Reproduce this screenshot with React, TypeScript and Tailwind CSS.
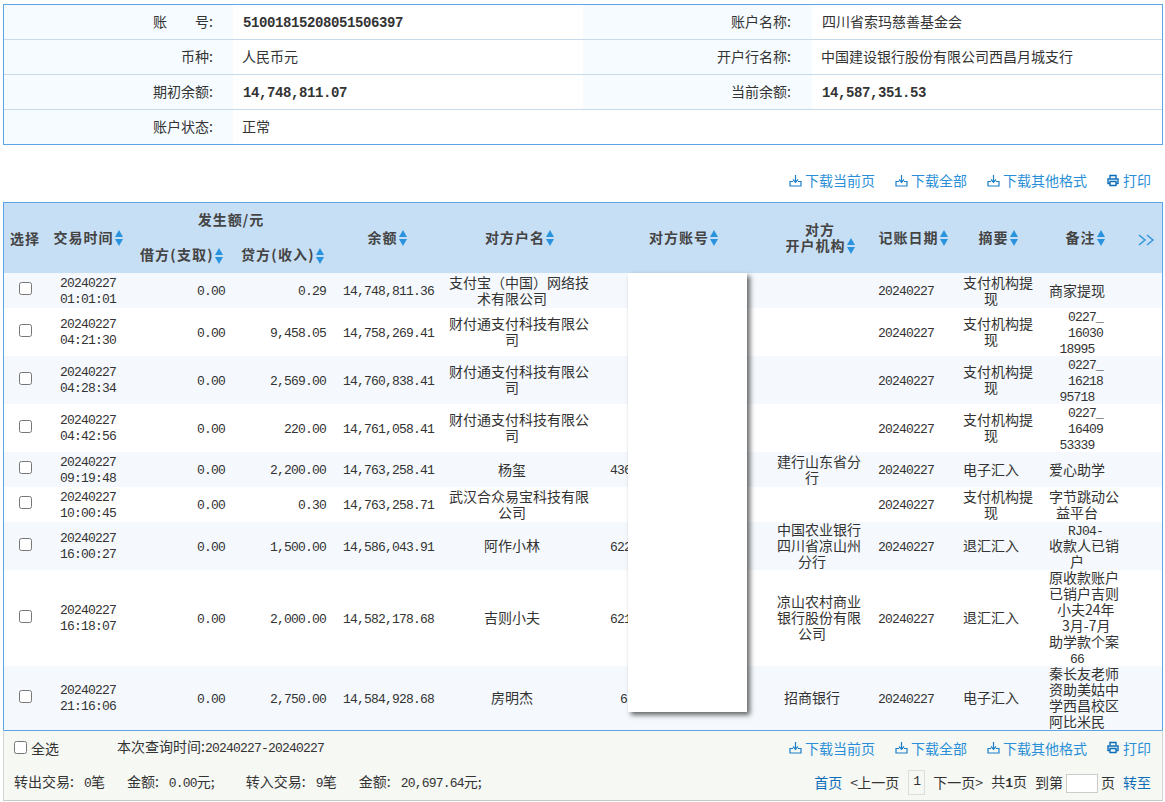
const num = "font-['Liberation_Mono'] text-[13px] tracking-[-0.8px]";
const bold = "font-['Liberation_Mono'] text-[14px] font-bold tracking-[-0.4px]";

function Sort() {
  return (
    <svg width="8" height="16" viewBox="0 0 8 16" className="inline-block align-middle ml-[1px] mb-[1px]">
      <polygon points="4,0 8,7 0,7" fill="#2a93dd" />
      <polygon points="0,9 8,9 4,16" fill="#2a93dd" />
    </svg>
  );
}

function Tray() {
  return (
    <svg width="13" height="13" viewBox="0 0 13 13" fill="none" stroke="#1c7fc8" strokeWidth="1.2">
      <path d="M6.5 1v7M4 5.5l2.5 2.8L9 5.5" />
      <path d="M4 7.5H1v4.5h11V7.5H9" />
    </svg>
  );
}

function Printer() {
  return (
    <svg width="12" height="13" viewBox="0 0 12 13" fill="none" stroke="#0b6cb8" strokeWidth="1.4">
      <path d="M3 4.5V1.5h6v3" />
      <path d="M3 9.5H1V5h10v4.5H9" />
      <path d="M3 7.5h6v4H3z" />
    </svg>
  );
}

function Links() {
  return (
    <div className="flex gap-[20px] text-[#2a8fd8]">
      <span className="flex items-center gap-[3px]"><Tray />下载当前页</span>
      <span className="flex items-center gap-[3px]"><Tray />下载全部</span>
      <span className="flex items-center gap-[3px]"><Tray />下载其他格式</span>
      <span className="flex items-center gap-[4px]"><Printer />打印</span>
    </div>
  );
}

function Label({ children, right }: { children: React.ReactNode; right?: boolean }) {
  return (
    <td className={`bg-[#f6fbff] pb-[2px] ${right ? "pr-[18px]" : "pr-[17px]"}`}>
      <div className="flex justify-end">
        {children}<span className="w-[7px]">:</span>
      </div>
    </td>
  );
}

function Paren({ a, b }: { a: string; b: string }) {
  return (
    <>
      {a}<span className="inline-block w-[7px] text-center">(</span>{b}<span className="inline-block w-[7px] text-center">)</span>
    </>
  );
}

const rows = [
  { h: "h-[35px]", d: "20240227", t: "01:01:01", c: "0.29", b: "14,748,811.36", name: ["支付宝（中国）网络技", "术有限公司"], acct: "", bank: [], sum: ["支付机构提", "现"], note: ["商家提现"] },
  { h: "h-[48px]", d: "20240227", t: "04:21:30", c: "9,458.05", b: "14,758,269.41", name: ["财付通支付科技有限公", "司"], acct: "", bank: [], sum: ["支付机构提", "现"], note: ["0227_", "16030", "18995"], code: true },
  { h: "h-[48px]", d: "20240227", t: "04:28:34", c: "2,569.00", b: "14,760,838.41", name: ["财付通支付科技有限公", "司"], acct: "", bank: [], sum: ["支付机构提", "现"], note: ["0227_", "16218", "95718"], code: true },
  { h: "h-[48px]", d: "20240227", t: "04:42:56", c: "220.00", b: "14,761,058.41", name: ["财付通支付科技有限公", "司"], acct: "", bank: [], sum: ["支付机构提", "现"], note: ["0227_", "16409", "53339"], code: true },
  { h: "h-[35px]", d: "20240227", t: "09:19:48", c: "2,200.00", b: "14,763,258.41", name: ["杨玺"], acct: "436", bank: ["建行山东省分", "行"], sum: ["电子汇入"], note: ["爱心助学"] },
  { h: "h-[35px]", d: "20240227", t: "10:00:45", c: "0.30", b: "14,763,258.71", name: ["武汉合众易宝科技有限", "公司"], acct: "", bank: [], sum: ["支付机构提", "现"], note: ["字节跳动公", "益平台"] },
  { h: "h-[48px]", d: "20240227", t: "16:00:27", c: "1,500.00", b: "14,586,043.91", name: ["阿作小林"], acct: "622", bank: ["中国农业银行", "四川省凉山州", "分行"], sum: ["退汇汇入"], note: ["RJ04-", "收款人已销", "户"], rj: true },
  { h: "h-[96px]", d: "20240227", t: "16:18:07", c: "2,000.00", b: "14,582,178.68", name: ["吉则小夫"], acct: "621", bank: ["凉山农村商业", "银行股份有限", "公司"], sum: ["退汇汇入"], note: ["原收款账户", "已销户吉则", "小夫24年", "3月-7月", "助学款个案", "66"], long: true },
  { h: "h-[64px]", d: "20240227", t: "21:16:06", c: "2,750.00", b: "14,584,928.68", name: ["房明杰"], acct: "6", far: true, bank: ["招商银行"], sum: ["电子汇入"], note: ["秦长友老师", "资助美姑中", "学西昌校区", "阿比米民"] },
] as any[];

function Lines({ items }: { items: string[] }) {
  return (
    <div className="-translate-y-[1.5px]">
      {items.map((s) => <div key={s} className="whitespace-nowrap">{s}</div>)}
    </div>
  );
}

function Note({ r }: { r: any }) {
  return (
    <div className="-translate-y-[1.5px]">
      {r.note.map((s: string, i: number) => {
        let cls = "";
        if (r.code && i < 2) cls = "inline-block pl-[17px]";
        if (r.rj && i === 0) cls = "inline-block pl-[17px]";
        if (r.long && i === 2) cls = "inline-block pl-[8px]";
        if (r.long && i === 3) cls = "inline-block pl-[13px]";
        const latin = /^[0-9A-Z_-]+$/.test(s);
        return (
          <div key={s} className={`whitespace-nowrap ${latin ? `translate-y-[3px] ${num}` : ""}`}>
            <span className={cls}>{s}</span>
          </div>
        );
      })}
    </div>
  );
}

export default function App() {
  return (
    <div className="w-[1165px] h-[802px] overflow-hidden bg-white text-[#333] text-[14px] leading-4 pt-[4px] pl-[3px] pr-[2px] font-['Noto_Sans_CJK_SC','Liberation_Sans',sans-serif]">
      <div className="border border-[#5ba4e6]">
        <table className="w-full table-fixed">
          <colgroup>
            <col className="w-[229px]" />
            <col className="w-[350px]" />
            <col className="w-[229px]" />
            <col />
          </colgroup>
          <tbody>
            <tr className="h-[34px] border-b border-[#c8d9ea]">
              <Label>账<span className="w-[28px]" />号</Label>
              <td className={`pl-[10px] pt-[2px] ${bold}`}>51001815208051506397</td>
              <Label right>账户名称</Label>
              <td className="pl-[10px] pb-[2px]">四川省索玛慈善基金会</td>
            </tr>
            <tr className="h-[35px] border-b border-[#c8d9ea]">
              <Label>币种</Label>
              <td className="pl-[9px] pb-[2px]">人民币元</td>
              <Label right>开户行名称</Label>
              <td className="pl-[9px] pb-[2px]">中国建设银行股份有限公司西昌月城支行</td>
            </tr>
            <tr className="h-[35px] border-b border-[#c8d9ea]">
              <Label>期初余额</Label>
              <td className={`pl-[10px] pt-[2px] ${bold}`}>14,748,811.07</td>
              <Label right>当前余额</Label>
              <td className={`pl-[10px] pt-[2px] ${bold}`}>14,587,351.53</td>
            </tr>
            <tr className="h-[35px]">
              <Label>账户状态</Label>
              <td className="pl-[9px] pb-[2px]">正常</td>
              <td></td>
              <td></td>
            </tr>
          </tbody>
        </table>
      </div>

      <div className="h-[57px] flex items-end justify-end pb-[14px] pr-[12px]">
        <Links />
      </div>

      <div className="relative border-x border-t border-[#5ba4e6]">
        <table className="w-full table-fixed">
          <colgroup>
            <col className="w-[42px]" />
            <col className="w-[84px]" />
            <col className="w-[103px]" />
            <col className="w-[99px]" />
            <col className="w-[110px]" />
            <col className="w-[155px]" />
            <col className="w-[173px]" />
            <col className="w-[100px]" />
            <col className="w-[86px]" />
            <col className="w-[84px]" />
            <col className="w-[90px]" />
            <col />
          </colgroup>
          <thead className="bg-[#c7dff5] text-[#444] font-bold text-center tracking-[1px]">
            <tr className="h-[35px]">
              <th rowSpan={2}>选择</th>
              <th rowSpan={2}>交易时间<Sort /></th>
              <th colSpan={2} className="pb-[4px]">发生额/元</th>
              <th rowSpan={2}>余额<Sort /></th>
              <th rowSpan={2}>对方户名<Sort /></th>
              <th rowSpan={2}>对方账号<Sort /></th>
              <th rowSpan={2}>对方<br />开户机构<Sort /></th>
              <th rowSpan={2}>记账日期<Sort /></th>
              <th rowSpan={2}>摘要<Sort /></th>
              <th rowSpan={2}>备注<Sort /></th>
              <th rowSpan={2}>
                <svg width="17" height="12" viewBox="0 0 17 12" fill="none" stroke="#2a93dd" strokeWidth="1.4" className="inline-block">
                  <path d="M1 1l6 5-6 5M9 1l6 5-6 5" />
                </svg>
              </th>
            </tr>
            <tr className="h-[35px]">
              <th><Paren a="借方" b="支取" /><Sort /></th>
              <th><Paren a="贷方" b="收入" /><Sort /></th>
            </tr>
          </thead>
          <tbody>
            {rows.map((r, i) => (
              <tr key={r.t} className={`${r.h} ${i % 2 === 0 ? "bg-[#f5f9fd]" : "bg-white"}`}>
                <td>
                  <input type="checkbox" className="block w-[13px] h-[13px] mx-auto mb-[4px]" />
                </td>
                <td className={`text-center pt-[2px] ${num}`}>
                  {r.d}<br />{r.t}
                </td>
                <td className={`text-right pr-[8px] pt-[3px] ${num}`}>0.00</td>
                <td className={`text-right pr-[6px] pt-[3px] ${num}`}>{r.c}</td>
                <td className={`text-right pr-[8px] pt-[3px] ${num}`}>{r.b}</td>
                <td className="pl-[7px] pr-[22px] text-center">
                  <Lines items={r.name} />
                </td>
                <td className={`${r.far ? "pl-[23px]" : "pl-[13px]"} pt-[3px] ${num}`}>{r.acct}</td>
                <td className="pl-[7px] pr-[23px] text-center">
                  <Lines items={r.bank} />
                </td>
                <td className={`pl-[8px] pt-[3px] ${num}`}>{r.d}</td>
                <td className="pl-[7px] pr-[21px] text-center">
                  <Lines items={r.sum} />
                </td>
                <td className="pl-[9px] pr-[25px] text-center">
                  <Note r={r} />
                </td>
                <td></td>
              </tr>
            ))}
          </tbody>
        </table>
        <div className="absolute left-[624px] top-[70px] w-[119px] h-[439px] bg-white shadow-[3px_3px_5px_rgba(0,0,0,0.6)]" />
      </div>

      <div className="h-[71px] bg-[#f6f8f4] border-t border-t-[#5ba4e6] border-x border-x-[#d4d4d4] border-b border-b-[#c8c8c8] pl-[10px] pr-[11px] flex flex-col">
        <div className="h-[33px] flex items-center justify-between">
          <div className="flex items-center">
            <input type="checkbox" className="w-[13px] h-[13px] mr-[4px]" />
            <span>全选</span>
            <span className="ml-[58px]">本次查询时间:<span className={num}>20240227-20240227</span></span>
          </div>
          <Links />
        </div>
        <div className="h-[36px] flex items-center justify-between">
          <div className="flex items-center">
            <span>转出交易:<span className={`ml-[10px] ${num}`}>0</span>笔</span>
            <span className="ml-[22px]">金额:<span className={`ml-[10px] ${num}`}>0.00</span>元<span className="inline-block w-[7px]">;</span></span>
            <span className="ml-[28px]">转入交易:<span className={`ml-[10px] ${num}`}>9</span>笔</span>
            <span className="ml-[22px]">金额:<span className={`ml-[10px] ${num}`}>20,697.64</span>元<span className="inline-block w-[7px]">;</span></span>
          </div>
          <div className="flex items-center">
            <span className="text-[#0b6cb8]">首页</span>
            <span className="ml-[8px]"><span className="inline-block w-[7px]">&lt;</span>上一页</span>
            <span className={`ml-[9px] w-[17px] h-[25px] border border-[#ddd] flex items-center justify-center ${num}`}>1</span>
            <span className="ml-[8px]">下一页<span className="inline-block w-[7px]">&gt;</span></span>
            <span className="ml-[9px]">共<b className="font-['Liberation_Mono'] text-[13px]">1</b>页</span>
            <span className="ml-[8px]">到第</span>
            <span className="ml-[3px] mt-[3px] w-[32px] h-[19px] bg-white border border-[#ccc]" />
            <span className="ml-[3px]">页</span>
            <span className="ml-[8px] text-[#0b6cb8]">转至</span>
          </div>
        </div>
      </div>
    </div>
  );
}
